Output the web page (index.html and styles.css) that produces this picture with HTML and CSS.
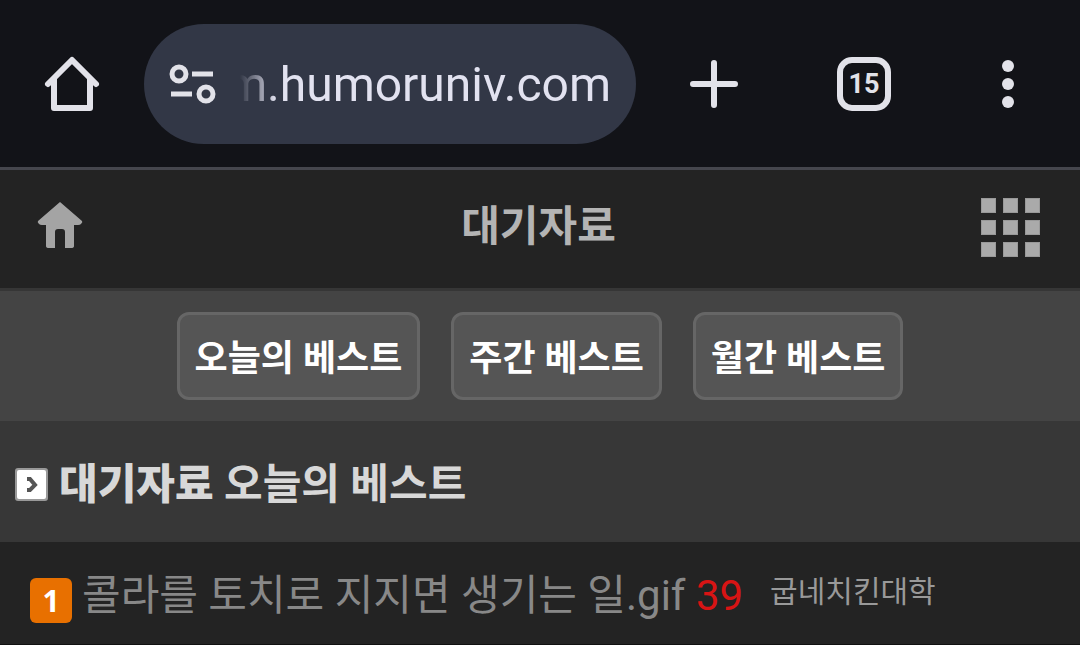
FILE: index.html
```html
<!DOCTYPE html>
<html lang="ko">
<head>
    <meta charset="UTF-8">
    <meta name="viewport" content="width=device-width, initial-scale=1">
    <title>대기자료</title>
    <link rel="stylesheet" href="styles.css">
</head>
<body>
    <div class="browser-bar">
        <button class="bar-button" aria-label="Home">
            <svg width="60" height="60" viewBox="0 0 60 60" fill="none" stroke="currentColor" stroke-width="6" stroke-linecap="round" stroke-linejoin="round">
                <path d="M6 30L30 6L54 30"/>
                <path d="M12 25V54H48V25" stroke-linecap="butt"/>
            </svg>
        </button>
        <div class="address">
            <svg class="site-icon" width="48" height="42" viewBox="0 0 48 42" fill="none" stroke="currentColor" stroke-width="5">
                <circle cx="11" cy="11" r="7"/>
                <path d="M24 11H45M3 31H24"/>
                <circle cx="38" cy="31" r="7"/>
            </svg>
            <input class="url" type="text" value="m.humoruniv.com" aria-label="Address">
        </div>
        <button class="bar-button spaced" aria-label="New tab">
            <svg width="48" height="48" viewBox="0 0 48 48" fill="none" stroke="currentColor" stroke-width="6" stroke-linecap="round">
                <path d="M24 3V45M3 24H45"/>
            </svg>
        </button>
        <button class="bar-button spaced" aria-label="Tabs"><span class="tab-count">15</span></button>
        <button class="bar-button" aria-label="Menu">
            <svg width="12" height="48" viewBox="0 0 12 48" fill="currentColor">
                <circle cx="6" cy="6" r="6"/>
                <circle cx="6" cy="24" r="6"/>
                <circle cx="6" cy="42" r="6"/>
            </svg>
        </button>
    </div>

    <header class="header">
        <a class="home" href="#" aria-label="홈">
            <svg width="46" height="47" viewBox="0 0 46 47" fill="currentColor">
                <path d="M23 0L45 19Q46 20 44 22Q43 23 41 23H37V44Q37 46 34 46H28V30Q28 27 25 27H21Q18 27 18 30V46H12Q9 46 9 44V23H5Q3 23 2 22Q0 20 1 19Z"/>
            </svg>
        </a>
        <h1 class="title">대기자료</h1>
        <button class="apps" aria-label="메뉴">
            <span></span><span></span><span></span>
            <span></span><span></span><span></span>
            <span></span><span></span><span></span>
        </button>
    </header>

    <nav class="best-nav">
        <a href="#">오늘의 베스트</a>
        <a href="#">주간 베스트</a>
        <a href="#">월간 베스트</a>
    </nav>

    <h2 class="section-title">
        <svg width="34" height="34" viewBox="0 0 34 34">
            <rect width="33" height="33" rx="3" fill="#999"/>
            <rect x="2" y="2" width="29" height="29" rx="2" fill="#fff"/>
            <path d="M12 11H15L20 17L15 22H12" fill="none" stroke="#555" stroke-width="4"/>
        </svg>
        <span><b>대기자료</b> 오늘의 베스트</span>
    </h2>

    <ul class="list">
        <li>
            <span class="rank">1</span>
            <a class="subject" href="#">콜라를 토치로 지지면 생기는 일.gif <span class="comments">39</span></a>
            <span class="author">굽네치킨대학</span>
        </li>
    </ul>
</body>
</html>
```

FILE: styles.css
```css
* {
    box-sizing: border-box;
}

body {
    margin: 0;
    background: #232323;
    font-family: Roboto, "Noto Sans CJK KR", sans-serif;
    overflow: hidden;
}

a {
    text-decoration: none;
}

button {
    border: none;
    background: none;
    padding: 0;
    font-family: inherit;
    cursor: pointer;
}

/* browser toolbar */
.browser-bar {
    display: flex;
    align-items: center;
    height: 170px;
    padding-top: 1px;
    background: #121318;
    border-bottom: 3px solid #45464d;
}

.bar-button {
    display: flex;
    justify-content: center;
    align-items: center;
    flex: 0 0 144px;
    height: 120px;
    color: #e2e2e9;
}

.spaced {
    margin-left: 6px;
}

.address {
    display: flex;
    align-items: center;
    flex: 1;
    min-width: 0;
    height: 120px;
    padding: 0 25px 0 24px;
    border-radius: 60px;
    background: #323746;
    color: #e2e2e9;
}

.site-icon {
    flex: none;
    margin-right: 24px;
}

.url {
    flex: 1;
    min-width: 0;
    height: 72px;
    padding: 0;
    border: none;
    outline: none;
    background: none;
    color: #e2e2f0;
    font-family: Roboto, sans-serif;
    font-size: 48px;
    direction: rtl;
    -webkit-mask-image: linear-gradient(to right, transparent, #000 36px);
    mask-image: linear-gradient(to right, transparent, #000 36px);
}

.tab-count {
    display: flex;
    justify-content: center;
    align-items: center;
    width: 54px;
    height: 54px;
    border: 6px solid #e2e2e9;
    border-radius: 15px;
    font-size: 27px;
    font-weight: bold;
}

/* site header */
.header {
    display: grid;
    grid-template-columns: 1fr auto 1fr;
    align-items: center;
    height: 121px;
    padding: 0 40px 4px 37px;
    border-bottom: 3px solid #363636;
}

.home {
    justify-self: start;
    height: 47px;
    margin-bottom: 4px;
    color: #a4a4a4;
}

.title {
    margin: 0;
    color: #b4b4b4;
    font-size: 42px;
    line-height: 60px;
}

.apps {
    display: grid;
    grid-template-columns: repeat(3, 15px);
    gap: 7px;
    justify-self: end;
}

.apps span {
    height: 15px;
    border: 1px solid #999;
    background: #aaa;
}

.best-nav {
    display: flex;
    justify-content: center;
    gap: 31px;
    padding: 21px 0;
    background: #444;
}

.best-nav a {
    padding: 18px 15px 12px;
    border: 3px solid #666;
    border-radius: 12px;
    background: #555;
    color: #fff;
    font-size: 36px;
    font-weight: bold;
    line-height: 52px;
}

.section-title {
    display: flex;
    align-items: center;
    gap: 10px;
    margin: 0;
    padding: 34px 15px 27px;
    background: #373737;
    color: #d8d8d8;
    font-size: 42px;
    font-weight: 600;
    line-height: 60px;
}

/* post list */
.list {
    margin: 0;
    padding: 0;
    list-style: none;
}

.list li {
    display: flex;
    align-items: center;
    height: 103px;
    padding: 6px 30px 0;
    border-bottom: 1px solid #111;
    white-space: nowrap;
}

.rank {
    width: 42px;
    margin: 8px 10px 0 0;
    border-radius: 6px;
    background: #e87000;
    color: #fff;
    font-family: "Noto Sans", sans-serif;
    font-size: 30px;
    font-weight: bold;
    line-height: 45px;
    text-align: center;
}

.subject {
    color: #888;
    font-size: 42px;
    line-height: 60px;
}

.comments {
    color: #d81414;
}

.author {
    margin-left: 27px;
    padding-bottom: 8px;
    color: #999;
    font-size: 30px;
    line-height: 42px;
}
```
